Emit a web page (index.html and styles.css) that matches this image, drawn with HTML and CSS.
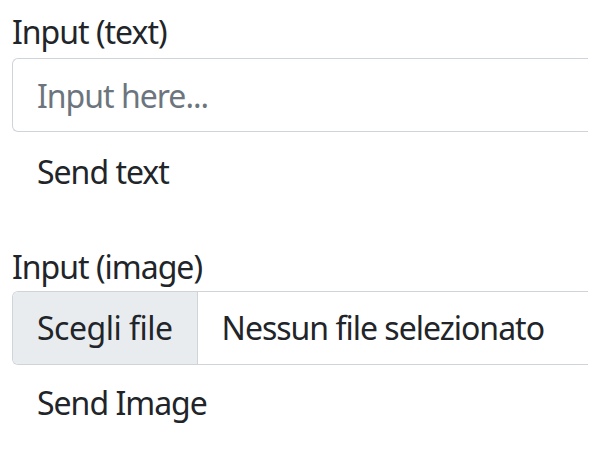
FILE: index.html
```html
<!DOCTYPE html>
<html lang="it">
<head>
<meta charset="utf-8">
<title>Input</title>
<link rel="stylesheet" href="styles.css">
</head>
<body>
<main class="page">
  <section class="group group-text">
    <label class="form-label" for="txt">Input (text)</label>
    <input class="form-control" id="txt" type="text" placeholder="Input here...">
    <button class="btn" type="button">Send text</button>
  </section>
  <section class="group group-image">
    <label class="form-label">Input (image)</label>
    <div class="file-control">
      <span class="file-button">Scegli file</span>
      <span class="file-name">Nessun file selezionato</span>
    </div>
    <button class="btn" type="button">Send Image</button>
  </section>
</main>
</body>
</html>
```

FILE: styles.css
```css
html, body {
  margin: 0;
  padding: 0;
  background: #fff;
}

.page {
  padding: 8px 1px 0 12px;
  font-family: "Noto Sans", "Open Sans", sans-serif;
  font-size: 32px;
  line-height: 48px;
  letter-spacing: -1px;
  color: #212529;
}

.group {
  display: flex;
  flex-direction: column;
  align-items: flex-start;
}

.group-image {
  margin-top: 34px;
}

.form-label {
  display: block;
}

.group-text .form-label {
  margin-bottom: 2px;
}

.form-control,
.file-control {
  box-sizing: border-box;
  width: 100%;
  height: 74px;
  border: 1px solid #ced4da;
  border-right: 0;
  border-radius: 6px 0 0 6px;
  background: #fff;
  font: inherit;
  letter-spacing: inherit;
  color: #212529;
}

.form-control {
  padding: 12px 24px;
  outline: none;
}

.form-control::placeholder {
  color: #6c757d;
  opacity: 1;
}

.file-control {
  display: flex;
  align-items: stretch;
  overflow: hidden;
}

.file-button {
  padding: 12px 24px;
  background: #e9ecef;
  border-right: 1px solid #ced4da;
  letter-spacing: -0.5px;
}

.file-name {
  padding: 12px 24px;
  white-space: nowrap;
}

.btn {
  padding: 12px 24px;
  border: 1px solid transparent;
  background: transparent;
  font: inherit;
  letter-spacing: inherit;
  color: #212529;
  border-radius: 6px;
}

.group-text .btn {
  margin-top: 3px;
}

.group-image .btn {
  margin-top: 1px;
}
```
